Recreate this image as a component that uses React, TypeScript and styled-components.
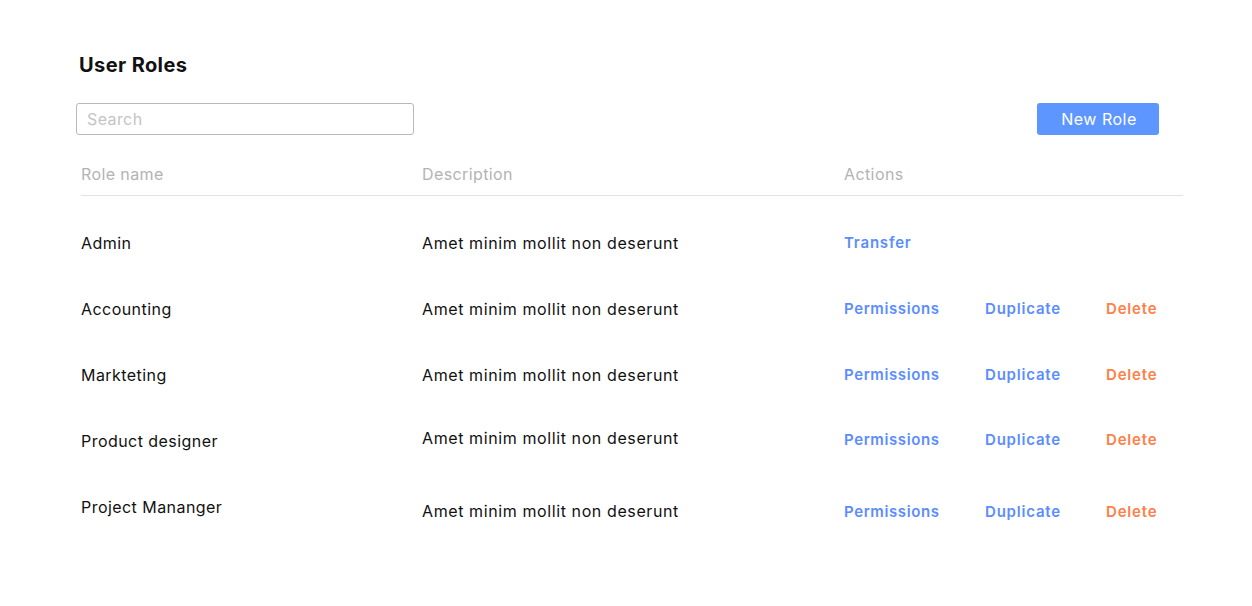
import React from 'react';
import styled, { createGlobalStyle } from 'styled-components';

const GlobalStyle = createGlobalStyle`
  html, body { margin: 0; padding: 0; background: #fff; }
  body { font-family: Inter, "Open Sans", sans-serif; color: #111; }
`;

interface Role {
  name: string;
  description: string;
  actions: string[];
  descShift?: number;
  actionShift?: number;
}

const roles: Role[] = [
  { name: 'Admin', description: 'Amet minim mollit non deserunt', actions: ['Transfer'] },
  { name: 'Accounting', description: 'Amet minim mollit non deserunt', actions: ['Permissions', 'Duplicate', 'Delete'] },
  { name: 'Markteting', description: 'Amet minim mollit non deserunt', actions: ['Permissions', 'Duplicate', 'Delete'] },
  { name: 'Product designer', description: 'Amet minim mollit non deserunt', actions: ['Permissions', 'Duplicate', 'Delete'], descShift: -3, actionShift: -2 },
  { name: 'Project Mananger', description: 'Amet minim mollit non deserunt', actions: ['Permissions', 'Duplicate', 'Delete'], descShift: 4, actionShift: 4 },
];

export default function App() {
  return (
    <Page>
      <GlobalStyle />
      <Title>User Roles</Title>
      <Toolbar>
        <SearchInput placeholder="Search" />
        <NewButton>New Role</NewButton>
      </Toolbar>
      <Table>
        <HeadRow>
          <HeadCell>Role name</HeadCell>
          <HeadCell>Description</HeadCell>
          <HeadCell>Actions</HeadCell>
        </HeadRow>
        <Body>
          {roles.map((r) => (
            <Row key={r.name}>
              <Cell $shift={0}>{r.name}</Cell>
              <Cell $shift={r.descShift ?? 0} $spacing={0.6}>{r.description}</Cell>
              <Actions $shift={r.actionShift ?? -1}>
                {r.actions.map((a) => (
                  <ActionLink key={a} $danger={a === 'Delete'} $wide={a === 'Permissions'}>
                    {a}
                  </ActionLink>
                ))}
              </Actions>
            </Row>
          ))}
        </Body>
      </Table>
    </Page>
  );
}

const Page = styled.div`
  width: 1252px;
  height: 606px;
  box-sizing: border-box;
  padding: 52px 0 0 76px;
`;

const Title = styled.h1`
  margin: 0 0 0 3px;
  font-size: 20px;
  font-weight: 700;
  line-height: 26px;
  letter-spacing: 0.4px;
`;

const Toolbar = styled.div`
  display: flex;
  align-items: center;
  justify-content: space-between;
  width: 1083px;
  margin-top: 25px;
`;

const SearchInput = styled.input`
  width: 338px;
  height: 32px;
  box-sizing: border-box;
  border: 1px solid #b9b9b9;
  border-radius: 3px;
  padding: 0 10px;
  font-family: inherit;
  font-size: 16px;
  letter-spacing: 0.4px;
  outline: none;
  &::placeholder { color: #c4c4c4; }
`;

const NewButton = styled.button`
  width: 122px;
  height: 32px;
  border: none;
  border-radius: 3px;
  background: #5e96ff;
  color: #fff;
  font-family: inherit;
  font-size: 16px;
  letter-spacing: 0.5px;
  padding: 0 0 0 2px;
`;

const Table = styled.div`
  width: 1102px;
  margin: 25px 0 0 5px;
`;

const HeadRow = styled.div`
  display: grid;
  grid-template-columns: 341px 422px 1fr;
  height: 35px;
  align-items: center;
  border-bottom: 1px solid #e2e2e2;
`;

const HeadCell = styled.div`
  font-size: 16px;
  color: #b3b3b3;
  letter-spacing: 0.4px;
  margin-top: -8px;
`;

const Body = styled.div`
  padding-top: 14px;
`;

const Row = styled.div`
  display: grid;
  grid-template-columns: 341px 422px 1fr;
  height: 66px;
  align-items: center;
`;

const Cell = styled.div<{ $shift: number; $spacing?: number }>`
  font-size: 16px;
  color: #111;
  letter-spacing: ${(p) => p.$spacing ?? 0.45}px;
  transform: translateY(${(p) => p.$shift}px);
`;

const Actions = styled.div<{ $shift: number }>`
  display: flex;
  align-items: center;
  transform: translateY(${(p) => p.$shift}px);
`;

const ActionLink = styled.a<{ $danger: boolean; $wide: boolean }>`
  display: block;
  width: ${(p) => (p.$wide ? '141px' : '121px')};
  font-size: 15px;
  font-weight: 600;
  letter-spacing: ${(p) => (p.$wide ? 0.6 : 0.8)}px;
  color: ${(p) => (p.$danger ? '#ff8048' : '#5b8dff')};
  cursor: pointer;
`;
